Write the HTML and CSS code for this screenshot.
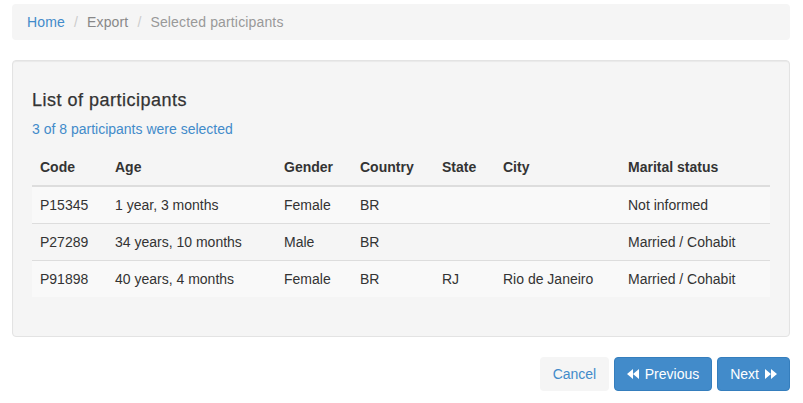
FILE: index.html
```html
<!DOCTYPE html>
<html>
<head>
<meta charset="utf-8">
<link rel="stylesheet" href="styles.css">
</head>
<body>
<div class="container">
  <ol class="breadcrumb">
    <li><a class="crumb-link" href="#">Home</a></li>
    <li class="sep">/</li>
    <li class="crumb-muted">Export</li>
    <li class="sep">/</li>
    <li class="crumb-active">Selected participants</li>
  </ol>

  <div class="well">
    <h4 class="title">List of participants</h4>
    <p class="subtitle">3 of 8 participants were selected</p>
    <table class="table">
      <colgroup>
        <col class="c-code"><col class="c-age"><col class="c-gender"><col class="c-country"><col class="c-state"><col class="c-city"><col class="c-marital">
      </colgroup>
      <thead>
        <tr><th>Code</th><th>Age</th><th>Gender</th><th>Country</th><th>State</th><th>City</th><th>Marital status</th></tr>
      </thead>
      <tbody>
        <tr><td>P15345</td><td>1 year, 3 months</td><td>Female</td><td>BR</td><td></td><td></td><td>Not informed</td></tr>
        <tr><td>P27289</td><td>34 years, 10 months</td><td>Male</td><td>BR</td><td></td><td></td><td>Married / Cohabit</td></tr>
        <tr><td>P91898</td><td>40 years, 4 months</td><td>Female</td><td>BR</td><td>RJ</td><td>Rio de Janeiro</td><td>Married / Cohabit</td></tr>
      </tbody>
    </table>
  </div>

  <div class="actions">
    <button class="btn btn-cancel">Cancel</button>
    <button class="btn btn-primary"><svg class="ico" width="12" height="10" viewBox="0 0 12 10"><path d="M6 0 L0 5 L6 10 Z M12 0 L6 5 L12 10 Z" fill="#fff"/></svg><span>Previous</span></button>
    <button class="btn btn-primary"><span>Next</span><svg class="ico" width="12" height="10" viewBox="0 0 12 10"><path d="M0 0 L6 5 L0 10 Z M6 0 L12 5 L6 10 Z" fill="#fff"/></svg></button>
  </div>
</div>
</body>
</html>
```

FILE: styles.css
```css
* { box-sizing: border-box; }
html, body { margin: 0; padding: 0; background: #fff; }
body {
  font-family: "Liberation Sans", Arial, Helvetica, sans-serif;
  font-size: 14px;
  line-height: 20px;
  color: #333;
}
.container {
  padding: 4px 13px 0 12px;
}
.breadcrumb {
  list-style: none;
  margin: 0 0 20px 0;
  padding: 8px 15px;
  background: #f5f5f5;
  border-radius: 4px;
  display: flex;
  letter-spacing: 0.15px;
}
.breadcrumb li { display: block; }
.crumb-link { color: #428bca; text-decoration: none; }
.crumb-muted { color: #888; }
.crumb-active { color: #999; }
.sep { color: #ccc; padding: 0 9px 0 9px; }

.well {
  background: #f5f5f5;
  border: 1px solid #e3e3e3;
  border-radius: 4px;
  box-shadow: inset 0 1px 1px rgba(0,0,0,0.05);
  padding: 19px;
  margin-bottom: 20px;
}
.title {
  margin: 10px 0 10px 0;
  font-size: 18px;
  font-weight: 500;
  line-height: 20px;
  letter-spacing: 0.5px;
  -webkit-text-stroke: 0.25px #333;
  color: #333;
}
.subtitle {
  margin: -1px 0 10px 0;
  color: #428bca;
}
.table {
  width: 100%;
  border-collapse: collapse;
  table-layout: fixed;
  margin-bottom: 20px;
}
.c-code { width: 75px; }
.c-age { width: 169px; }
.c-gender { width: 76px; }
.c-country { width: 82px; }
.c-state { width: 61px; }
.c-city { width: 125px; }
.c-marital { width: 150px; }
.table th, .table td {
  text-align: left;
  padding: 8px;
  line-height: 20px;
  vertical-align: top;
  white-space: nowrap;
}
.table th {
  font-weight: bold;
  border-bottom: 2px solid #ddd;
}
.table td { border-top: 1px solid #ddd; }
.table tbody tr:first-child td { border-top: 0; }
.table tbody tr:nth-child(odd) { background: #f9f9f9; }

.actions {
  display: flex;
  justify-content: flex-end;
  gap: 5px;
}
.btn {
  font-family: inherit;
  font-size: 14px;
  line-height: 20px;
  padding: 6px 12px;
  border-radius: 4px;
  border: 1px solid transparent;
  cursor: pointer;
  display: inline-flex;
  align-items: center;
  gap: 6px;
}
.btn-cancel {
  background: #f5f5f5;
  color: #428bca;
  padding: 6px 11.5px;
}
.btn-primary {
  background: #428bca;
  border-color: #357ebd;
  color: #fff;
}
.ico { display: block; }
```
